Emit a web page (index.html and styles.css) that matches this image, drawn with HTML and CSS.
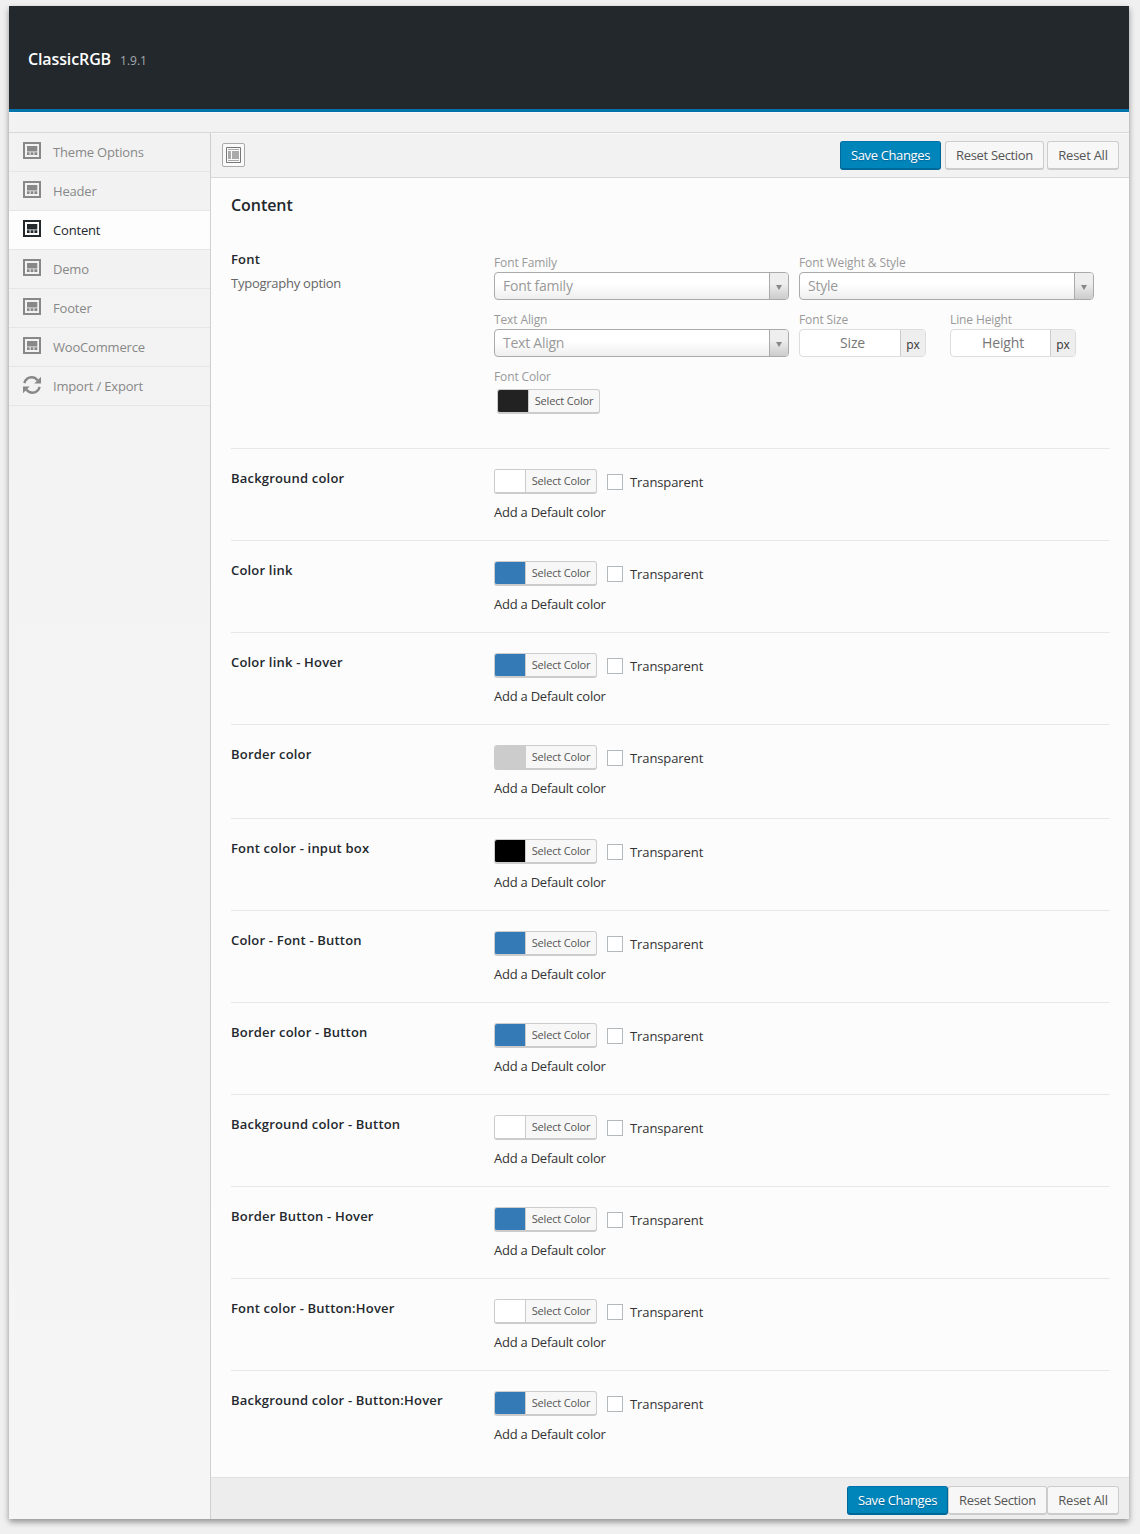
FILE: index.html
```
<!DOCTYPE html>
<html lang="en">
<head>
<meta charset="utf-8">
<title>ClassicRGB</title>
<link rel="stylesheet" href="styles.css">
</head>
<body>
<svg width="0" height="0" class="defs">
  <symbol id="panel" viewBox="0 0 18 17"><path fill="currentColor" fill-rule="evenodd" d="M0 0h18v17H0zM2 2v13h14V2zM4 4h10.300v5.500H4zM4 10.200h2.600V13H4zM7.600 10.200h2.800V13H7.600zM11.400 10.200h2.900V13h-2.900z"/></symbol>
  <symbol id="sync" viewBox="0 0 18 18"><path fill="none" stroke="currentColor" stroke-width="2.4" d="M1.300 7.200C2.600 3 5.400 1.300 8.700 1.300c2.400 0 4.300 1 5.800 2.900M16.700 10.800C15.400 15 12.600 16.700 9.300 16.700c-2.400 0-4.300-1-5.800-2.900"/><path fill="currentColor" d="M18 .8v6.700h-6.700zM0 17.200v-6.700h6.700z"/></symbol>
</svg>
<div class="frame">
  <header class="head"><h1>ClassicRGB</h1><span class="version">1.9.1</span></header>
  <div class="strip"></div>
  <div class="body">
    <nav class="side">
      <a class="item"><svg class="icon"><use href="#panel"/></svg><span>Theme Options</span></a>
      <a class="item"><svg class="icon"><use href="#panel"/></svg><span>Header</span></a>
      <a class="item active"><svg class="icon"><use href="#panel"/></svg><span>Content</span></a>
      <a class="item"><svg class="icon"><use href="#panel"/></svg><span>Demo</span></a>
      <a class="item"><svg class="icon"><use href="#panel"/></svg><span>Footer</span></a>
      <a class="item"><svg class="icon"><use href="#panel"/></svg><span>WooCommerce</span></a>
      <a class="item"><svg class="icon sync"><use href="#sync"/></svg><span>Import / Export</span></a>
    </nav>
    <main class="main">
      <div class="toolbar">
        <button class="expand"><svg width="15" height="16" viewBox="0 0 15 16"><path fill="none" stroke="#777" d="M.5.5h14v15H.5z"/><path fill="#aaa" d="M2 2h11v1H2zM2 4h3v8H2zM6 4h7v8H6zM2 13h11v1H2z"/></svg></button>
        <div class="actions">
          <button class="btn primary">Save Changes</button>
          <button class="btn reset">Reset Section</button>
          <button class="btn all">Reset All</button>
        </div>
      </div>
      <div class="panel">
        <h2>Content</h2>
        <section class="typo">
          <div class="label"><h3>Font</h3><p>Typography option</p></div>
          <div class="controls">
            <div class="line">
              <div class="control"><label class="cap">Font Family</label><div class="select"><span>Font family</span><i></i></div></div>
              <div class="control"><label class="cap">Font Weight &amp; Style</label><div class="select"><span>Style</span><i></i></div></div>
            </div>
            <div class="line">
              <div class="control"><label class="cap">Text Align</label><div class="select"><span>Text Align</span><i></i></div></div>
              <div class="control unit"><label class="cap">Font Size</label><div class="measure"><span>Size</span><b>px</b></div></div>
              <div class="control unit"><label class="cap">Line Height</label><div class="measure"><span>Height</span><b>px</b></div></div>
            </div>
            <label class="cap">Font Color</label>
            <button class="picker inset"><i class="ink"></i><span>Select Color</span></button>
          </div>
        </section>
        <section class="row"><h3>Background color</h3><div><div class="choice"><button class="picker"><i class="white"></i><span>Select Color</span></button><i class="check"></i><label>Transparent</label></div><p>Add a Default color</p></div></section>
        <section class="row"><h3>Color link</h3><div><div class="choice"><button class="picker"><i class="blue"></i><span>Select Color</span></button><i class="check"></i><label>Transparent</label></div><p>Add a Default color</p></div></section>
        <section class="row"><h3>Color link - Hover</h3><div><div class="choice"><button class="picker"><i class="blue"></i><span>Select Color</span></button><i class="check"></i><label>Transparent</label></div><p>Add a Default color</p></div></section>
        <section class="row tall"><h3>Border color</h3><div><div class="choice"><button class="picker"><i class="gray"></i><span>Select Color</span></button><i class="check"></i><label>Transparent</label></div><p>Add a Default color</p></div></section>
        <section class="row"><h3>Font color - input box</h3><div><div class="choice"><button class="picker"><i class="black"></i><span>Select Color</span></button><i class="check"></i><label>Transparent</label></div><p>Add a Default color</p></div></section>
        <section class="row"><h3>Color - Font - Button</h3><div><div class="choice"><button class="picker"><i class="blue"></i><span>Select Color</span></button><i class="check"></i><label>Transparent</label></div><p>Add a Default color</p></div></section>
        <section class="row"><h3>Border color - Button</h3><div><div class="choice"><button class="picker"><i class="blue"></i><span>Select Color</span></button><i class="check"></i><label>Transparent</label></div><p>Add a Default color</p></div></section>
        <section class="row"><h3>Background color - Button</h3><div><div class="choice"><button class="picker"><i class="white"></i><span>Select Color</span></button><i class="check"></i><label>Transparent</label></div><p>Add a Default color</p></div></section>
        <section class="row"><h3>Border Button - Hover</h3><div><div class="choice"><button class="picker"><i class="blue"></i><span>Select Color</span></button><i class="check"></i><label>Transparent</label></div><p>Add a Default color</p></div></section>
        <section class="row"><h3>Font color - Button:Hover</h3><div><div class="choice"><button class="picker"><i class="white"></i><span>Select Color</span></button><i class="check"></i><label>Transparent</label></div><p>Add a Default color</p></div></section>
        <section class="row"><h3>Background color - Button:Hover</h3><div><div class="choice"><button class="picker"><i class="blue"></i><span>Select Color</span></button><i class="check"></i><label>Transparent</label></div><p>Add a Default color</p></div></section>
      </div>
      <footer class="foot">
        <button class="btn primary">Save Changes</button>
        <button class="btn reset">Reset Section</button>
        <button class="btn all">Reset All</button>
      </footer>
    </main>
  </div>
</div>
</body>
</html>
```

FILE: styles.css
```
* { box-sizing: border-box; }
body { margin: 0; padding: 6px 11px 15px 9px; background: #f0f0f0; color: #333; font: 13px/20px "Open Sans", "Noto Sans", sans-serif; }
h1, h2, h3, p { margin: 0; }
button { padding: 0; font-family: inherit; white-space: nowrap; }
.defs { position: absolute; }
.frame { height: 1513px; display: flex; flex-direction: column; background: #f2f2f2; box-shadow: 0 3px 6px rgba(0,0,0,.4); }
.head { height: 106px; padding: 4px 19px 0; background: #23282d; border-bottom: 3px solid #0073aa; display: flex; align-items: center; gap: 9px; }
h1 { font-size: 16px; font-weight: 600; color: #fff; letter-spacing: -.12px; padding-bottom: 1px; }
.version { font-size: 12px; color: #a3a8ad; padding-top: 3px; }
.strip { height: 21px; border-top: 1px solid #fafafa; border-bottom: 1px solid #d8d8d8; }
.body { flex: 1; display: flex; }
.side { width: 202px; border-right: 1px solid #d0d0d0; background: linear-gradient(#f2f2f2, #f5f5f5); }
.item { height: 39px; padding: 0 14px; display: flex; align-items: center; gap: 12px; border-bottom: 1px solid #e6e6e6; color: #888; }
.item span { font-weight: 500; letter-spacing: -.18px; }
.icon { width: 18px; height: 17px; margin-top: -3px; }
.sync { height: 18px; }
.active { background: #fdfdfd; color: #23282d; }
.main { flex: 1; display: flex; flex-direction: column; }
.toolbar { height: 45px; padding: 0 10px 0 11px; display: flex; justify-content: space-between; align-items: center; border-top: 1px solid #fafafa; border-bottom: 1px solid #d8d8d8; }
.expand { width: 23px; height: 24px; margin-bottom: 2px; border: 1px solid #aaa; border-radius: 2px; background: #fafafa; display: grid; place-items: center; }
.actions { display: flex; gap: 3px; }
.btn { height: 29px; border: 1px solid #ccc; border-bottom-width: 2px; border-radius: 3px; background: #f7f7f7; color: #555; font-size: 13px; }
.primary { width: 101px; background: #0085ba; border-color: #0073aa #006799 #006799; color: #fff; text-shadow: 0 1px 1px #006799; letter-spacing: -.35px; }
.reset { width: 99px; letter-spacing: -.33px; }
.actions .reset { margin-left: 1px; }
.all { width: 72px; letter-spacing: -.25px; }
.panel { height: 1299px; padding: 17px 19px 0 20px; background: #fcfcfc; }
h2 { font-size: 16px; line-height: 20px; font-weight: 600; color: #23282d; letter-spacing: -.05px; }
.typo { height: 233px; padding-top: 34px; display: flex; }
.label { width: 263px; }
h3 { width: 263px; font-size: 13px; line-height: 20px; font-weight: 600; color: #23282d; letter-spacing: .19px; }
.label p { padding-top: 4px; color: #666; letter-spacing: -.25px; }
.controls { width: 605px; padding-top: 6px; }
.cap { display: block; height: 17px; padding-top: 2px; font-size: 12px; line-height: 12px; color: #999; letter-spacing: -.12px; }
.line { display: flex; gap: 10px; height: 57px; }
.control { width: 295px; }
.select { height: 28px; border: 1px solid #aaa; border-radius: 4px; background: linear-gradient(#fff 45%, #eee); display: flex; overflow: hidden; color: #999; font-size: 14px; line-height: 26px; letter-spacing: -.25px; }
.select span { flex: 1; padding-left: 8px; }
.select i { width: 19px; border-left: 1px solid #aaa; background: linear-gradient(#eee 40%, #ccc); display: flex; align-items: center; justify-content: center; }
.select i::after { content: ""; margin-top: 2px; border: 3.5px solid transparent; border-top: 5px solid #888; border-bottom: 0; }
.unit { width: 127px; }
.unit + .unit { width: 126px; margin-left: 14px; }
.measure { height: 28px; border: 1px solid #ddd; border-radius: 4px; display: flex; background: #fff; overflow: hidden; line-height: 26px; }
.measure span { flex: 1; padding-left: 5px; text-align: center; font-size: 14px; letter-spacing: -.15px; color: #777; }
.measure b { width: 25px; border-left: 1px solid #ccc; background: #eee; text-align: center; font-size: 12px; line-height: 30px; font-weight: 400; color: #333; }
.picker { width: 103px; height: 25px; border: 1px solid #ccc; border-bottom-width: 2px; border-radius: 3px; background: #f7f7f7; display: flex; overflow: hidden; color: #555; font-size: 11px; line-height: 22px; letter-spacing: -.18px; }
.picker i { width: 31px; border-right: 1px solid #ccc; }
.picker span { flex: 1; text-align: center; }
.inset { margin: 3px 0 0 3px; }
.row { height: 92px; padding-top: 20px; border-top: 1px solid #e7e7e7; display: flex; }
.row h3 { margin-top: -1px; }
.tall { height: 94px; }
.choice { display: flex; align-items: center; color: #333; }
.choice label { margin-left: 7px; letter-spacing: -.1px; }
.check { width: 16px; height: 16px; margin-left: 10px; border: 1px solid #b4b9be; background: #fff; }
.row p { margin-top: 8px; letter-spacing: -.24px; }
.white { background: #fff; }
.blue { background: #337ab7; }
.gray { background: #ccc; }
.black { background: #000; }
.ink { background: #222; }
.foot { flex: 1; padding: 4px 10px 0; background: #ededed; border-top: 1px solid #e2e2e2; display: flex; justify-content: flex-end; align-items: center; }
```
